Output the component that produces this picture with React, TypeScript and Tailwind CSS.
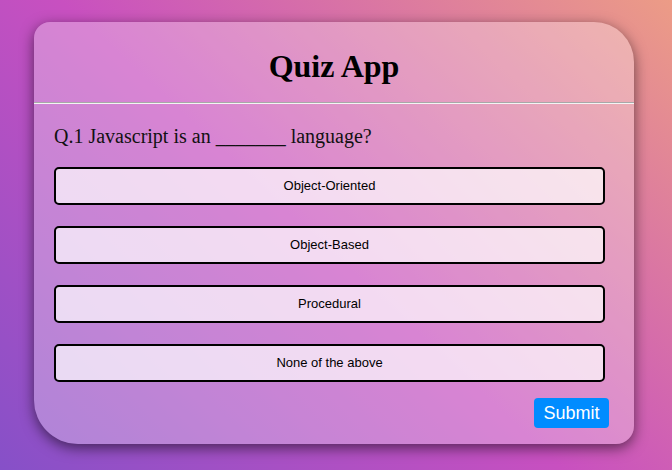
const options = ["Object-Oriented", "Object-Based", "Procedural", "None of the above"];

const App = () => {
  return (
    <div className="h-[470px] w-full overflow-hidden bg-[linear-gradient(43deg,#8650c8_0%,#c850c0_48%,#ec9c86_100%)] pt-[22px]">
      <div className="ml-[34px] h-[422px] w-[600px] rounded-[16px_40px_18px_44px] bg-white/30 shadow-[0_4px_14px_rgba(0,0,0,0.55)]">
        <div className="flex h-[80px] items-center justify-center">
          <h1 className="pt-[8px] font-['Liberation_Serif',serif] text-[32px] font-bold text-black">
            Quiz App
          </h1>
        </div>
        <div className="border-t border-b border-t-[#a8a8a8] border-b-[#f4f4f4]" />
        <div className="px-[20px] pt-[20px]">
          <p className="font-['Liberation_Serif',serif] text-[20px] leading-[24px] text-[#111]">
            Q.1 Javascript is an _______ language?
          </p>
          <div className="mt-[19px] flex flex-col gap-[21px]">
            {options.map((o) => (
              <button
                key={o}
                type="button"
                className="h-[38px] w-[551px] rounded-[5px] border-2 border-black bg-white/70 font-['Liberation_Sans',Arial,sans-serif] text-[13px] text-black"
              >
                {o}
              </button>
            ))}
          </div>
          <div className="mt-[16px] flex justify-end pr-[5px]">
            <button
              type="button"
              className="h-[30px] w-[75px] rounded-[4px] bg-[#008cff] font-['Liberation_Sans',Arial,sans-serif] text-[18px] text-white"
            >
              Submit
            </button>
          </div>
        </div>
      </div>
    </div>
  );
};

export default App;
